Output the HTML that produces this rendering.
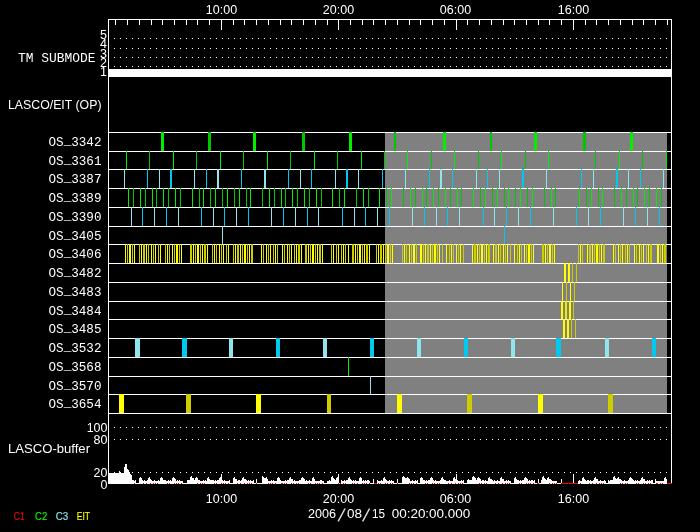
<!DOCTYPE html>
<html lang="en">
<head>
<meta charset="utf-8">
<title>LASCO/EIT schedule 2006/08/15</title>
<style>
html,body{margin:0;padding:0;background:#000;}
body{width:700px;height:532px;overflow:hidden;}
svg{display:block;}
</style>
</head>
<body>
<svg width="700" height="532" viewBox="0 0 700 532">
<rect width="700" height="532" fill="#000"/>
<g shape-rendering="crispEdges">
<rect x="385" y="133" width="282" height="280" fill="#808080"/>
<rect x="108" y="19" width="1" height="465" fill="#fff"/>
<rect x="671" y="19" width="1" height="465" fill="#fff"/>
<rect x="108" y="19" width="564" height="1" fill="#fff"/>
<rect x="115" y="20" width="1" height="5" fill="#fff"/>
<rect x="127" y="20" width="1" height="5" fill="#fff"/>
<rect x="139" y="20" width="1" height="5" fill="#fff"/>
<rect x="151" y="20" width="1" height="5" fill="#fff"/>
<rect x="162" y="20" width="1" height="5" fill="#fff"/>
<rect x="174" y="20" width="1" height="5" fill="#fff"/>
<rect x="186" y="20" width="1" height="5" fill="#fff"/>
<rect x="197" y="20" width="1" height="5" fill="#fff"/>
<rect x="209" y="20" width="1" height="5" fill="#fff"/>
<rect x="221" y="20" width="1" height="10" fill="#fff"/>
<rect x="233" y="20" width="1" height="5" fill="#fff"/>
<rect x="244" y="20" width="1" height="5" fill="#fff"/>
<rect x="256" y="20" width="1" height="5" fill="#fff"/>
<rect x="268" y="20" width="1" height="5" fill="#fff"/>
<rect x="280" y="20" width="1" height="5" fill="#fff"/>
<rect x="291" y="20" width="1" height="5" fill="#fff"/>
<rect x="303" y="20" width="1" height="5" fill="#fff"/>
<rect x="315" y="20" width="1" height="5" fill="#fff"/>
<rect x="327" y="20" width="1" height="5" fill="#fff"/>
<rect x="338" y="20" width="1" height="10" fill="#fff"/>
<rect x="350" y="20" width="1" height="5" fill="#fff"/>
<rect x="362" y="20" width="1" height="5" fill="#fff"/>
<rect x="373" y="20" width="1" height="5" fill="#fff"/>
<rect x="385" y="20" width="1" height="5" fill="#fff"/>
<rect x="397" y="20" width="1" height="5" fill="#fff"/>
<rect x="409" y="20" width="1" height="5" fill="#fff"/>
<rect x="420" y="20" width="1" height="5" fill="#fff"/>
<rect x="432" y="20" width="1" height="5" fill="#fff"/>
<rect x="444" y="20" width="1" height="5" fill="#fff"/>
<rect x="456" y="20" width="1" height="10" fill="#fff"/>
<rect x="467" y="20" width="1" height="5" fill="#fff"/>
<rect x="479" y="20" width="1" height="5" fill="#fff"/>
<rect x="491" y="20" width="1" height="5" fill="#fff"/>
<rect x="503" y="20" width="1" height="5" fill="#fff"/>
<rect x="514" y="20" width="1" height="5" fill="#fff"/>
<rect x="526" y="20" width="1" height="5" fill="#fff"/>
<rect x="538" y="20" width="1" height="5" fill="#fff"/>
<rect x="549" y="20" width="1" height="5" fill="#fff"/>
<rect x="561" y="20" width="1" height="5" fill="#fff"/>
<rect x="573" y="20" width="1" height="10" fill="#fff"/>
<rect x="585" y="20" width="1" height="5" fill="#fff"/>
<rect x="596" y="20" width="1" height="5" fill="#fff"/>
<rect x="608" y="20" width="1" height="5" fill="#fff"/>
<rect x="620" y="20" width="1" height="5" fill="#fff"/>
<rect x="632" y="20" width="1" height="5" fill="#fff"/>
<rect x="643" y="20" width="1" height="5" fill="#fff"/>
<rect x="655" y="20" width="1" height="5" fill="#fff"/>
<rect x="667" y="20" width="1" height="5" fill="#fff"/>
<path d="M114 38h1v1h-1zM120 38h1v1h-1zM126 38h1v1h-1zM132 38h1v1h-1zM138 38h1v1h-1zM144 38h1v1h-1zM150 38h1v1h-1zM156 38h1v1h-1zM162 38h1v1h-1zM168 38h1v1h-1zM174 38h1v1h-1zM180 38h1v1h-1zM186 38h1v1h-1zM192 38h1v1h-1zM198 38h1v1h-1zM204 38h1v1h-1zM210 38h1v1h-1zM216 38h1v1h-1zM222 38h1v1h-1zM228 38h1v1h-1zM234 38h1v1h-1zM240 38h1v1h-1zM246 38h1v1h-1zM252 38h1v1h-1zM258 38h1v1h-1zM264 38h1v1h-1zM270 38h1v1h-1zM276 38h1v1h-1zM282 38h1v1h-1zM288 38h1v1h-1zM294 38h1v1h-1zM300 38h1v1h-1zM306 38h1v1h-1zM312 38h1v1h-1zM318 38h1v1h-1zM324 38h1v1h-1zM330 38h1v1h-1zM336 38h1v1h-1zM342 38h1v1h-1zM348 38h1v1h-1zM354 38h1v1h-1zM360 38h1v1h-1zM366 38h1v1h-1zM372 38h1v1h-1zM378 38h1v1h-1zM384 38h1v1h-1zM390 38h1v1h-1zM396 38h1v1h-1zM402 38h1v1h-1zM408 38h1v1h-1zM414 38h1v1h-1zM420 38h1v1h-1zM426 38h1v1h-1zM432 38h1v1h-1zM438 38h1v1h-1zM444 38h1v1h-1zM450 38h1v1h-1zM456 38h1v1h-1zM462 38h1v1h-1zM468 38h1v1h-1zM474 38h1v1h-1zM480 38h1v1h-1zM486 38h1v1h-1zM492 38h1v1h-1zM498 38h1v1h-1zM504 38h1v1h-1zM510 38h1v1h-1zM516 38h1v1h-1zM522 38h1v1h-1zM528 38h1v1h-1zM534 38h1v1h-1zM540 38h1v1h-1zM546 38h1v1h-1zM552 38h1v1h-1zM558 38h1v1h-1zM564 38h1v1h-1zM570 38h1v1h-1zM576 38h1v1h-1zM582 38h1v1h-1zM588 38h1v1h-1zM594 38h1v1h-1zM600 38h1v1h-1zM606 38h1v1h-1zM612 38h1v1h-1zM618 38h1v1h-1zM624 38h1v1h-1zM630 38h1v1h-1zM636 38h1v1h-1zM642 38h1v1h-1zM648 38h1v1h-1zM654 38h1v1h-1zM660 38h1v1h-1zM666 38h1v1h-1zM114 48h1v1h-1zM120 48h1v1h-1zM126 48h1v1h-1zM132 48h1v1h-1zM138 48h1v1h-1zM144 48h1v1h-1zM150 48h1v1h-1zM156 48h1v1h-1zM162 48h1v1h-1zM168 48h1v1h-1zM174 48h1v1h-1zM180 48h1v1h-1zM186 48h1v1h-1zM192 48h1v1h-1zM198 48h1v1h-1zM204 48h1v1h-1zM210 48h1v1h-1zM216 48h1v1h-1zM222 48h1v1h-1zM228 48h1v1h-1zM234 48h1v1h-1zM240 48h1v1h-1zM246 48h1v1h-1zM252 48h1v1h-1zM258 48h1v1h-1zM264 48h1v1h-1zM270 48h1v1h-1zM276 48h1v1h-1zM282 48h1v1h-1zM288 48h1v1h-1zM294 48h1v1h-1zM300 48h1v1h-1zM306 48h1v1h-1zM312 48h1v1h-1zM318 48h1v1h-1zM324 48h1v1h-1zM330 48h1v1h-1zM336 48h1v1h-1zM342 48h1v1h-1zM348 48h1v1h-1zM354 48h1v1h-1zM360 48h1v1h-1zM366 48h1v1h-1zM372 48h1v1h-1zM378 48h1v1h-1zM384 48h1v1h-1zM390 48h1v1h-1zM396 48h1v1h-1zM402 48h1v1h-1zM408 48h1v1h-1zM414 48h1v1h-1zM420 48h1v1h-1zM426 48h1v1h-1zM432 48h1v1h-1zM438 48h1v1h-1zM444 48h1v1h-1zM450 48h1v1h-1zM456 48h1v1h-1zM462 48h1v1h-1zM468 48h1v1h-1zM474 48h1v1h-1zM480 48h1v1h-1zM486 48h1v1h-1zM492 48h1v1h-1zM498 48h1v1h-1zM504 48h1v1h-1zM510 48h1v1h-1zM516 48h1v1h-1zM522 48h1v1h-1zM528 48h1v1h-1zM534 48h1v1h-1zM540 48h1v1h-1zM546 48h1v1h-1zM552 48h1v1h-1zM558 48h1v1h-1zM564 48h1v1h-1zM570 48h1v1h-1zM576 48h1v1h-1zM582 48h1v1h-1zM588 48h1v1h-1zM594 48h1v1h-1zM600 48h1v1h-1zM606 48h1v1h-1zM612 48h1v1h-1zM618 48h1v1h-1zM624 48h1v1h-1zM630 48h1v1h-1zM636 48h1v1h-1zM642 48h1v1h-1zM648 48h1v1h-1zM654 48h1v1h-1zM660 48h1v1h-1zM666 48h1v1h-1zM114 57h1v1h-1zM120 57h1v1h-1zM126 57h1v1h-1zM132 57h1v1h-1zM138 57h1v1h-1zM144 57h1v1h-1zM150 57h1v1h-1zM156 57h1v1h-1zM162 57h1v1h-1zM168 57h1v1h-1zM174 57h1v1h-1zM180 57h1v1h-1zM186 57h1v1h-1zM192 57h1v1h-1zM198 57h1v1h-1zM204 57h1v1h-1zM210 57h1v1h-1zM216 57h1v1h-1zM222 57h1v1h-1zM228 57h1v1h-1zM234 57h1v1h-1zM240 57h1v1h-1zM246 57h1v1h-1zM252 57h1v1h-1zM258 57h1v1h-1zM264 57h1v1h-1zM270 57h1v1h-1zM276 57h1v1h-1zM282 57h1v1h-1zM288 57h1v1h-1zM294 57h1v1h-1zM300 57h1v1h-1zM306 57h1v1h-1zM312 57h1v1h-1zM318 57h1v1h-1zM324 57h1v1h-1zM330 57h1v1h-1zM336 57h1v1h-1zM342 57h1v1h-1zM348 57h1v1h-1zM354 57h1v1h-1zM360 57h1v1h-1zM366 57h1v1h-1zM372 57h1v1h-1zM378 57h1v1h-1zM384 57h1v1h-1zM390 57h1v1h-1zM396 57h1v1h-1zM402 57h1v1h-1zM408 57h1v1h-1zM414 57h1v1h-1zM420 57h1v1h-1zM426 57h1v1h-1zM432 57h1v1h-1zM438 57h1v1h-1zM444 57h1v1h-1zM450 57h1v1h-1zM456 57h1v1h-1zM462 57h1v1h-1zM468 57h1v1h-1zM474 57h1v1h-1zM480 57h1v1h-1zM486 57h1v1h-1zM492 57h1v1h-1zM498 57h1v1h-1zM504 57h1v1h-1zM510 57h1v1h-1zM516 57h1v1h-1zM522 57h1v1h-1zM528 57h1v1h-1zM534 57h1v1h-1zM540 57h1v1h-1zM546 57h1v1h-1zM552 57h1v1h-1zM558 57h1v1h-1zM564 57h1v1h-1zM570 57h1v1h-1zM576 57h1v1h-1zM582 57h1v1h-1zM588 57h1v1h-1zM594 57h1v1h-1zM600 57h1v1h-1zM606 57h1v1h-1zM612 57h1v1h-1zM618 57h1v1h-1zM624 57h1v1h-1zM630 57h1v1h-1zM636 57h1v1h-1zM642 57h1v1h-1zM648 57h1v1h-1zM654 57h1v1h-1zM660 57h1v1h-1zM666 57h1v1h-1zM114 66h1v1h-1zM120 66h1v1h-1zM126 66h1v1h-1zM132 66h1v1h-1zM138 66h1v1h-1zM144 66h1v1h-1zM150 66h1v1h-1zM156 66h1v1h-1zM162 66h1v1h-1zM168 66h1v1h-1zM174 66h1v1h-1zM180 66h1v1h-1zM186 66h1v1h-1zM192 66h1v1h-1zM198 66h1v1h-1zM204 66h1v1h-1zM210 66h1v1h-1zM216 66h1v1h-1zM222 66h1v1h-1zM228 66h1v1h-1zM234 66h1v1h-1zM240 66h1v1h-1zM246 66h1v1h-1zM252 66h1v1h-1zM258 66h1v1h-1zM264 66h1v1h-1zM270 66h1v1h-1zM276 66h1v1h-1zM282 66h1v1h-1zM288 66h1v1h-1zM294 66h1v1h-1zM300 66h1v1h-1zM306 66h1v1h-1zM312 66h1v1h-1zM318 66h1v1h-1zM324 66h1v1h-1zM330 66h1v1h-1zM336 66h1v1h-1zM342 66h1v1h-1zM348 66h1v1h-1zM354 66h1v1h-1zM360 66h1v1h-1zM366 66h1v1h-1zM372 66h1v1h-1zM378 66h1v1h-1zM384 66h1v1h-1zM390 66h1v1h-1zM396 66h1v1h-1zM402 66h1v1h-1zM408 66h1v1h-1zM414 66h1v1h-1zM420 66h1v1h-1zM426 66h1v1h-1zM432 66h1v1h-1zM438 66h1v1h-1zM444 66h1v1h-1zM450 66h1v1h-1zM456 66h1v1h-1zM462 66h1v1h-1zM468 66h1v1h-1zM474 66h1v1h-1zM480 66h1v1h-1zM486 66h1v1h-1zM492 66h1v1h-1zM498 66h1v1h-1zM504 66h1v1h-1zM510 66h1v1h-1zM516 66h1v1h-1zM522 66h1v1h-1zM528 66h1v1h-1zM534 66h1v1h-1zM540 66h1v1h-1zM546 66h1v1h-1zM552 66h1v1h-1zM558 66h1v1h-1zM564 66h1v1h-1zM570 66h1v1h-1zM576 66h1v1h-1zM582 66h1v1h-1zM588 66h1v1h-1zM594 66h1v1h-1zM600 66h1v1h-1zM606 66h1v1h-1zM612 66h1v1h-1zM618 66h1v1h-1zM624 66h1v1h-1zM630 66h1v1h-1zM636 66h1v1h-1zM642 66h1v1h-1zM648 66h1v1h-1zM654 66h1v1h-1zM660 66h1v1h-1zM666 66h1v1h-1zM114 427h1v1h-1zM120 427h1v1h-1zM126 427h1v1h-1zM132 427h1v1h-1zM138 427h1v1h-1zM144 427h1v1h-1zM150 427h1v1h-1zM156 427h1v1h-1zM162 427h1v1h-1zM168 427h1v1h-1zM174 427h1v1h-1zM180 427h1v1h-1zM186 427h1v1h-1zM192 427h1v1h-1zM198 427h1v1h-1zM204 427h1v1h-1zM210 427h1v1h-1zM216 427h1v1h-1zM222 427h1v1h-1zM228 427h1v1h-1zM234 427h1v1h-1zM240 427h1v1h-1zM246 427h1v1h-1zM252 427h1v1h-1zM258 427h1v1h-1zM264 427h1v1h-1zM270 427h1v1h-1zM276 427h1v1h-1zM282 427h1v1h-1zM288 427h1v1h-1zM294 427h1v1h-1zM300 427h1v1h-1zM306 427h1v1h-1zM312 427h1v1h-1zM318 427h1v1h-1zM324 427h1v1h-1zM330 427h1v1h-1zM336 427h1v1h-1zM342 427h1v1h-1zM348 427h1v1h-1zM354 427h1v1h-1zM360 427h1v1h-1zM366 427h1v1h-1zM372 427h1v1h-1zM378 427h1v1h-1zM384 427h1v1h-1zM390 427h1v1h-1zM396 427h1v1h-1zM402 427h1v1h-1zM408 427h1v1h-1zM414 427h1v1h-1zM420 427h1v1h-1zM426 427h1v1h-1zM432 427h1v1h-1zM438 427h1v1h-1zM444 427h1v1h-1zM450 427h1v1h-1zM456 427h1v1h-1zM462 427h1v1h-1zM468 427h1v1h-1zM474 427h1v1h-1zM480 427h1v1h-1zM486 427h1v1h-1zM492 427h1v1h-1zM498 427h1v1h-1zM504 427h1v1h-1zM510 427h1v1h-1zM516 427h1v1h-1zM522 427h1v1h-1zM528 427h1v1h-1zM534 427h1v1h-1zM540 427h1v1h-1zM546 427h1v1h-1zM552 427h1v1h-1zM558 427h1v1h-1zM564 427h1v1h-1zM570 427h1v1h-1zM576 427h1v1h-1zM582 427h1v1h-1zM588 427h1v1h-1zM594 427h1v1h-1zM600 427h1v1h-1zM606 427h1v1h-1zM612 427h1v1h-1zM618 427h1v1h-1zM624 427h1v1h-1zM630 427h1v1h-1zM636 427h1v1h-1zM642 427h1v1h-1zM648 427h1v1h-1zM654 427h1v1h-1zM660 427h1v1h-1zM666 427h1v1h-1zM114 439h1v1h-1zM120 439h1v1h-1zM126 439h1v1h-1zM132 439h1v1h-1zM138 439h1v1h-1zM144 439h1v1h-1zM150 439h1v1h-1zM156 439h1v1h-1zM162 439h1v1h-1zM168 439h1v1h-1zM174 439h1v1h-1zM180 439h1v1h-1zM186 439h1v1h-1zM192 439h1v1h-1zM198 439h1v1h-1zM204 439h1v1h-1zM210 439h1v1h-1zM216 439h1v1h-1zM222 439h1v1h-1zM228 439h1v1h-1zM234 439h1v1h-1zM240 439h1v1h-1zM246 439h1v1h-1zM252 439h1v1h-1zM258 439h1v1h-1zM264 439h1v1h-1zM270 439h1v1h-1zM276 439h1v1h-1zM282 439h1v1h-1zM288 439h1v1h-1zM294 439h1v1h-1zM300 439h1v1h-1zM306 439h1v1h-1zM312 439h1v1h-1zM318 439h1v1h-1zM324 439h1v1h-1zM330 439h1v1h-1zM336 439h1v1h-1zM342 439h1v1h-1zM348 439h1v1h-1zM354 439h1v1h-1zM360 439h1v1h-1zM366 439h1v1h-1zM372 439h1v1h-1zM378 439h1v1h-1zM384 439h1v1h-1zM390 439h1v1h-1zM396 439h1v1h-1zM402 439h1v1h-1zM408 439h1v1h-1zM414 439h1v1h-1zM420 439h1v1h-1zM426 439h1v1h-1zM432 439h1v1h-1zM438 439h1v1h-1zM444 439h1v1h-1zM450 439h1v1h-1zM456 439h1v1h-1zM462 439h1v1h-1zM468 439h1v1h-1zM474 439h1v1h-1zM480 439h1v1h-1zM486 439h1v1h-1zM492 439h1v1h-1zM498 439h1v1h-1zM504 439h1v1h-1zM510 439h1v1h-1zM516 439h1v1h-1zM522 439h1v1h-1zM528 439h1v1h-1zM534 439h1v1h-1zM540 439h1v1h-1zM546 439h1v1h-1zM552 439h1v1h-1zM558 439h1v1h-1zM564 439h1v1h-1zM570 439h1v1h-1zM576 439h1v1h-1zM582 439h1v1h-1zM588 439h1v1h-1zM594 439h1v1h-1zM600 439h1v1h-1zM606 439h1v1h-1zM612 439h1v1h-1zM618 439h1v1h-1zM624 439h1v1h-1zM630 439h1v1h-1zM636 439h1v1h-1zM642 439h1v1h-1zM648 439h1v1h-1zM654 439h1v1h-1zM660 439h1v1h-1zM666 439h1v1h-1zM114 472h1v1h-1zM120 472h1v1h-1zM126 472h1v1h-1zM132 472h1v1h-1zM138 472h1v1h-1zM144 472h1v1h-1zM150 472h1v1h-1zM156 472h1v1h-1zM162 472h1v1h-1zM168 472h1v1h-1zM174 472h1v1h-1zM180 472h1v1h-1zM186 472h1v1h-1zM192 472h1v1h-1zM198 472h1v1h-1zM204 472h1v1h-1zM210 472h1v1h-1zM216 472h1v1h-1zM222 472h1v1h-1zM228 472h1v1h-1zM234 472h1v1h-1zM240 472h1v1h-1zM246 472h1v1h-1zM252 472h1v1h-1zM258 472h1v1h-1zM264 472h1v1h-1zM270 472h1v1h-1zM276 472h1v1h-1zM282 472h1v1h-1zM288 472h1v1h-1zM294 472h1v1h-1zM300 472h1v1h-1zM306 472h1v1h-1zM312 472h1v1h-1zM318 472h1v1h-1zM324 472h1v1h-1zM330 472h1v1h-1zM336 472h1v1h-1zM342 472h1v1h-1zM348 472h1v1h-1zM354 472h1v1h-1zM360 472h1v1h-1zM366 472h1v1h-1zM372 472h1v1h-1zM378 472h1v1h-1zM384 472h1v1h-1zM390 472h1v1h-1zM396 472h1v1h-1zM402 472h1v1h-1zM408 472h1v1h-1zM414 472h1v1h-1zM420 472h1v1h-1zM426 472h1v1h-1zM432 472h1v1h-1zM438 472h1v1h-1zM444 472h1v1h-1zM450 472h1v1h-1zM456 472h1v1h-1zM462 472h1v1h-1zM468 472h1v1h-1zM474 472h1v1h-1zM480 472h1v1h-1zM486 472h1v1h-1zM492 472h1v1h-1zM498 472h1v1h-1zM504 472h1v1h-1zM510 472h1v1h-1zM516 472h1v1h-1zM522 472h1v1h-1zM528 472h1v1h-1zM534 472h1v1h-1zM540 472h1v1h-1zM546 472h1v1h-1zM552 472h1v1h-1zM558 472h1v1h-1zM564 472h1v1h-1zM570 472h1v1h-1zM576 472h1v1h-1zM582 472h1v1h-1zM588 472h1v1h-1zM594 472h1v1h-1zM600 472h1v1h-1zM606 472h1v1h-1zM612 472h1v1h-1zM618 472h1v1h-1zM624 472h1v1h-1zM630 472h1v1h-1zM636 472h1v1h-1zM642 472h1v1h-1zM648 472h1v1h-1zM654 472h1v1h-1zM660 472h1v1h-1zM666 472h1v1h-1z" fill="#fff"/>
<rect x="109" y="69" width="562" height="8" fill="#fff"/>
<rect x="108" y="132" width="564" height="1" fill="#fff"/>
<rect x="108" y="151" width="564" height="1" fill="#fff"/>
<rect x="108" y="169" width="564" height="1" fill="#fff"/>
<rect x="108" y="188" width="564" height="1" fill="#fff"/>
<rect x="108" y="207" width="564" height="1" fill="#fff"/>
<rect x="108" y="226" width="564" height="1" fill="#fff"/>
<rect x="108" y="244" width="564" height="1" fill="#fff"/>
<rect x="108" y="263" width="564" height="1" fill="#fff"/>
<rect x="108" y="282" width="564" height="1" fill="#fff"/>
<rect x="108" y="301" width="564" height="1" fill="#fff"/>
<rect x="108" y="319" width="564" height="1" fill="#fff"/>
<rect x="108" y="338" width="564" height="1" fill="#fff"/>
<rect x="108" y="357" width="564" height="1" fill="#fff"/>
<rect x="108" y="376" width="564" height="1" fill="#fff"/>
<rect x="108" y="394" width="564" height="1" fill="#fff"/>
<rect x="108" y="413" width="564" height="1" fill="#fff"/>
<rect x="161" y="132" width="3" height="19" fill="#00ee00"/>
<rect x="208" y="132" width="3" height="19" fill="#00c800"/>
<rect x="253" y="132" width="3" height="19" fill="#00ee00"/>
<rect x="302" y="132" width="3" height="19" fill="#00c800"/>
<rect x="349" y="132" width="3" height="19" fill="#00ee00"/>
<rect x="394" y="132" width="2" height="19" fill="#00c800"/>
<rect x="443" y="132" width="3" height="19" fill="#00ee00"/>
<rect x="490" y="132" width="2" height="19" fill="#00c800"/>
<rect x="534" y="132" width="3" height="19" fill="#00ee00"/>
<rect x="583" y="132" width="3" height="19" fill="#00c800"/>
<rect x="630" y="132" width="3" height="19" fill="#00ee00"/>
<rect x="126" y="151" width="1" height="18" fill="#00ee00"/>
<rect x="149" y="151" width="1" height="18" fill="#00c800"/>
<rect x="173" y="151" width="1" height="18" fill="#00ee00"/>
<rect x="196" y="151" width="1" height="18" fill="#00c800"/>
<rect x="220" y="151" width="1" height="18" fill="#00ee00"/>
<rect x="243" y="151" width="1" height="18" fill="#00c800"/>
<rect x="267" y="151" width="1" height="18" fill="#00ee00"/>
<rect x="290" y="151" width="1" height="18" fill="#00c800"/>
<rect x="314" y="151" width="1" height="18" fill="#00ee00"/>
<rect x="337" y="151" width="1" height="18" fill="#00c800"/>
<rect x="361" y="151" width="1" height="18" fill="#00ee00"/>
<rect x="384" y="151" width="1" height="18" fill="#00c800"/>
<rect x="407" y="151" width="1" height="18" fill="#00ee00"/>
<rect x="431" y="151" width="1" height="18" fill="#00c800"/>
<rect x="454" y="151" width="1" height="18" fill="#00ee00"/>
<rect x="478" y="151" width="1" height="18" fill="#00c800"/>
<rect x="501" y="151" width="1" height="18" fill="#00ee00"/>
<rect x="525" y="151" width="1" height="18" fill="#00c800"/>
<rect x="548" y="151" width="1" height="18" fill="#00ee00"/>
<rect x="595" y="151" width="1" height="18" fill="#00c800"/>
<rect x="619" y="151" width="1" height="18" fill="#00ee00"/>
<rect x="642" y="151" width="1" height="18" fill="#00c800"/>
<rect x="666" y="151" width="1" height="18" fill="#00ee00"/>
<rect x="124" y="169" width="1" height="19" fill="#8ee5ee"/>
<rect x="147" y="169" width="1" height="19" fill="#00c8ee"/>
<rect x="159" y="169" width="1" height="19" fill="#8ee5ee"/>
<rect x="170" y="169" width="2" height="19" fill="#00c8ee"/>
<rect x="194" y="169" width="1" height="19" fill="#8ee5ee"/>
<rect x="206" y="169" width="1" height="19" fill="#00c8ee"/>
<rect x="217" y="169" width="2" height="19" fill="#8ee5ee"/>
<rect x="241" y="169" width="1" height="19" fill="#00c8ee"/>
<rect x="264" y="169" width="2" height="19" fill="#8ee5ee"/>
<rect x="288" y="169" width="1" height="19" fill="#00c8ee"/>
<rect x="300" y="169" width="1" height="19" fill="#8ee5ee"/>
<rect x="311" y="169" width="1" height="19" fill="#00c8ee"/>
<rect x="335" y="169" width="1" height="19" fill="#8ee5ee"/>
<rect x="346" y="169" width="2" height="19" fill="#00c8ee"/>
<rect x="358" y="169" width="1" height="19" fill="#8ee5ee"/>
<rect x="382" y="169" width="1" height="19" fill="#00c8ee"/>
<rect x="405" y="169" width="1" height="19" fill="#8ee5ee"/>
<rect x="429" y="169" width="1" height="19" fill="#00c8ee"/>
<rect x="440" y="169" width="2" height="19" fill="#8ee5ee"/>
<rect x="452" y="169" width="1" height="19" fill="#00c8ee"/>
<rect x="476" y="169" width="1" height="19" fill="#8ee5ee"/>
<rect x="487" y="169" width="1" height="19" fill="#00c8ee"/>
<rect x="499" y="169" width="1" height="19" fill="#8ee5ee"/>
<rect x="522" y="169" width="2" height="19" fill="#00c8ee"/>
<rect x="546" y="169" width="1" height="19" fill="#8ee5ee"/>
<rect x="581" y="169" width="1" height="19" fill="#00c8ee"/>
<rect x="593" y="169" width="1" height="19" fill="#8ee5ee"/>
<rect x="616" y="169" width="2" height="19" fill="#00c8ee"/>
<rect x="628" y="169" width="1" height="19" fill="#8ee5ee"/>
<rect x="640" y="169" width="1" height="19" fill="#00c8ee"/>
<rect x="663" y="169" width="1" height="19" fill="#8ee5ee"/>
<rect x="128" y="188" width="1" height="19" fill="#00ee00"/>
<rect x="133" y="188" width="1" height="19" fill="#00c800"/>
<rect x="140" y="188" width="1" height="19" fill="#00ee00"/>
<rect x="145" y="188" width="1" height="19" fill="#00c800"/>
<rect x="152" y="188" width="1" height="19" fill="#00ee00"/>
<rect x="156" y="188" width="1" height="19" fill="#00c800"/>
<rect x="163" y="188" width="1" height="19" fill="#00ee00"/>
<rect x="168" y="188" width="1" height="19" fill="#00c800"/>
<rect x="175" y="188" width="1" height="19" fill="#00ee00"/>
<rect x="180" y="188" width="1" height="19" fill="#00c800"/>
<rect x="192" y="188" width="1" height="19" fill="#00ee00"/>
<rect x="199" y="188" width="1" height="19" fill="#00c800"/>
<rect x="203" y="188" width="1" height="19" fill="#00ee00"/>
<rect x="210" y="188" width="1" height="19" fill="#00c800"/>
<rect x="215" y="188" width="1" height="19" fill="#00ee00"/>
<rect x="222" y="188" width="1" height="19" fill="#00c800"/>
<rect x="227" y="188" width="1" height="19" fill="#00ee00"/>
<rect x="234" y="188" width="1" height="19" fill="#00c800"/>
<rect x="239" y="188" width="1" height="19" fill="#00ee00"/>
<rect x="246" y="188" width="1" height="19" fill="#00c800"/>
<rect x="250" y="188" width="1" height="19" fill="#00ee00"/>
<rect x="262" y="188" width="1" height="19" fill="#00c800"/>
<rect x="269" y="188" width="1" height="19" fill="#00ee00"/>
<rect x="274" y="188" width="1" height="19" fill="#00c800"/>
<rect x="281" y="188" width="1" height="19" fill="#00ee00"/>
<rect x="285" y="188" width="1" height="19" fill="#00c800"/>
<rect x="292" y="188" width="1" height="19" fill="#00ee00"/>
<rect x="297" y="188" width="1" height="19" fill="#00c800"/>
<rect x="304" y="188" width="1" height="19" fill="#00ee00"/>
<rect x="309" y="188" width="1" height="19" fill="#00c800"/>
<rect x="316" y="188" width="1" height="19" fill="#00ee00"/>
<rect x="321" y="188" width="1" height="19" fill="#00c800"/>
<rect x="332" y="188" width="1" height="19" fill="#00ee00"/>
<rect x="339" y="188" width="1" height="19" fill="#00c800"/>
<rect x="344" y="188" width="1" height="19" fill="#00ee00"/>
<rect x="356" y="188" width="1" height="19" fill="#00c800"/>
<rect x="363" y="188" width="1" height="19" fill="#00ee00"/>
<rect x="368" y="188" width="1" height="19" fill="#00c800"/>
<rect x="379" y="188" width="1" height="19" fill="#00ee00"/>
<rect x="386" y="188" width="1" height="19" fill="#00c800"/>
<rect x="391" y="188" width="1" height="19" fill="#00ee00"/>
<rect x="403" y="188" width="1" height="19" fill="#00c800"/>
<rect x="410" y="188" width="1" height="19" fill="#00ee00"/>
<rect x="415" y="188" width="1" height="19" fill="#00c800"/>
<rect x="422" y="188" width="1" height="19" fill="#00ee00"/>
<rect x="426" y="188" width="1" height="19" fill="#00c800"/>
<rect x="433" y="188" width="1" height="19" fill="#00ee00"/>
<rect x="438" y="188" width="1" height="19" fill="#00c800"/>
<rect x="445" y="188" width="1" height="19" fill="#00ee00"/>
<rect x="450" y="188" width="1" height="19" fill="#00c800"/>
<rect x="457" y="188" width="1" height="19" fill="#00ee00"/>
<rect x="461" y="188" width="1" height="19" fill="#00c800"/>
<rect x="473" y="188" width="1" height="19" fill="#00ee00"/>
<rect x="480" y="188" width="1" height="19" fill="#00c800"/>
<rect x="485" y="188" width="1" height="19" fill="#00ee00"/>
<rect x="492" y="188" width="1" height="19" fill="#00c800"/>
<rect x="497" y="188" width="1" height="19" fill="#00ee00"/>
<rect x="504" y="188" width="1" height="19" fill="#00c800"/>
<rect x="508" y="188" width="1" height="19" fill="#00ee00"/>
<rect x="515" y="188" width="1" height="19" fill="#00c800"/>
<rect x="520" y="188" width="1" height="19" fill="#00ee00"/>
<rect x="527" y="188" width="1" height="19" fill="#00c800"/>
<rect x="532" y="188" width="1" height="19" fill="#00ee00"/>
<rect x="544" y="188" width="1" height="19" fill="#00c800"/>
<rect x="551" y="188" width="1" height="19" fill="#00ee00"/>
<rect x="555" y="188" width="1" height="19" fill="#00c800"/>
<rect x="579" y="188" width="1" height="19" fill="#00ee00"/>
<rect x="586" y="188" width="1" height="19" fill="#00c800"/>
<rect x="591" y="188" width="1" height="19" fill="#00ee00"/>
<rect x="598" y="188" width="1" height="19" fill="#00c800"/>
<rect x="602" y="188" width="1" height="19" fill="#00ee00"/>
<rect x="614" y="188" width="1" height="19" fill="#00c800"/>
<rect x="621" y="188" width="1" height="19" fill="#00ee00"/>
<rect x="626" y="188" width="1" height="19" fill="#00c800"/>
<rect x="633" y="188" width="1" height="19" fill="#00ee00"/>
<rect x="637" y="188" width="1" height="19" fill="#00c800"/>
<rect x="644" y="188" width="1" height="19" fill="#00ee00"/>
<rect x="649" y="188" width="1" height="19" fill="#00c800"/>
<rect x="656" y="188" width="1" height="19" fill="#00ee00"/>
<rect x="661" y="188" width="1" height="19" fill="#00c800"/>
<rect x="131" y="207" width="1" height="19" fill="#8ee5ee"/>
<rect x="142" y="207" width="1" height="19" fill="#00c8ee"/>
<rect x="154" y="207" width="1" height="19" fill="#8ee5ee"/>
<rect x="166" y="207" width="1" height="19" fill="#00c8ee"/>
<rect x="178" y="207" width="1" height="19" fill="#8ee5ee"/>
<rect x="201" y="207" width="1" height="19" fill="#00c8ee"/>
<rect x="213" y="207" width="1" height="19" fill="#8ee5ee"/>
<rect x="224" y="207" width="1" height="19" fill="#00c8ee"/>
<rect x="236" y="207" width="1" height="19" fill="#8ee5ee"/>
<rect x="248" y="207" width="1" height="19" fill="#00c8ee"/>
<rect x="271" y="207" width="1" height="19" fill="#8ee5ee"/>
<rect x="283" y="207" width="1" height="19" fill="#00c8ee"/>
<rect x="295" y="207" width="1" height="19" fill="#8ee5ee"/>
<rect x="307" y="207" width="1" height="19" fill="#00c8ee"/>
<rect x="318" y="207" width="1" height="19" fill="#8ee5ee"/>
<rect x="342" y="207" width="1" height="19" fill="#00c8ee"/>
<rect x="354" y="207" width="1" height="19" fill="#8ee5ee"/>
<rect x="365" y="207" width="1" height="19" fill="#00c8ee"/>
<rect x="377" y="207" width="1" height="19" fill="#8ee5ee"/>
<rect x="389" y="207" width="1" height="19" fill="#00c8ee"/>
<rect x="412" y="207" width="1" height="19" fill="#8ee5ee"/>
<rect x="424" y="207" width="1" height="19" fill="#00c8ee"/>
<rect x="436" y="207" width="1" height="19" fill="#8ee5ee"/>
<rect x="447" y="207" width="1" height="19" fill="#00c8ee"/>
<rect x="459" y="207" width="1" height="19" fill="#8ee5ee"/>
<rect x="483" y="207" width="1" height="19" fill="#00c8ee"/>
<rect x="494" y="207" width="1" height="19" fill="#8ee5ee"/>
<rect x="506" y="207" width="1" height="19" fill="#00c8ee"/>
<rect x="518" y="207" width="1" height="19" fill="#8ee5ee"/>
<rect x="530" y="207" width="1" height="19" fill="#00c8ee"/>
<rect x="553" y="207" width="1" height="19" fill="#8ee5ee"/>
<rect x="576" y="207" width="1" height="19" fill="#00c8ee"/>
<rect x="588" y="207" width="1" height="19" fill="#8ee5ee"/>
<rect x="600" y="207" width="1" height="19" fill="#00c8ee"/>
<rect x="623" y="207" width="1" height="19" fill="#8ee5ee"/>
<rect x="635" y="207" width="1" height="19" fill="#00c8ee"/>
<rect x="647" y="207" width="1" height="19" fill="#8ee5ee"/>
<rect x="659" y="207" width="1" height="19" fill="#00c8ee"/>
<rect x="222" y="226" width="1" height="18" fill="#8ee5ee"/>
<rect x="504" y="226" width="1" height="18" fill="#00c8ee"/>
<rect x="125" y="244" width="1" height="19" fill="#ffff00"/>
<rect x="127" y="244" width="1" height="19" fill="#cdcd00"/>
<rect x="129" y="244" width="2" height="19" fill="#ffff00"/>
<rect x="132" y="244" width="1" height="19" fill="#cdcd00"/>
<rect x="134" y="244" width="1" height="19" fill="#ffff00"/>
<rect x="139" y="244" width="1" height="19" fill="#cdcd00"/>
<rect x="141" y="244" width="1" height="19" fill="#ffff00"/>
<rect x="143" y="244" width="2" height="19" fill="#cdcd00"/>
<rect x="146" y="244" width="1" height="19" fill="#ffff00"/>
<rect x="148" y="244" width="1" height="19" fill="#cdcd00"/>
<rect x="151" y="244" width="1" height="19" fill="#ffff00"/>
<rect x="153" y="244" width="1" height="19" fill="#cdcd00"/>
<rect x="155" y="244" width="1" height="19" fill="#ffff00"/>
<rect x="158" y="244" width="1" height="19" fill="#cdcd00"/>
<rect x="160" y="244" width="1" height="19" fill="#ffff00"/>
<rect x="165" y="244" width="1" height="19" fill="#cdcd00"/>
<rect x="167" y="244" width="1" height="19" fill="#ffff00"/>
<rect x="169" y="244" width="1" height="19" fill="#cdcd00"/>
<rect x="172" y="244" width="1" height="19" fill="#ffff00"/>
<rect x="174" y="244" width="1" height="19" fill="#cdcd00"/>
<rect x="176" y="244" width="2" height="19" fill="#ffff00"/>
<rect x="179" y="244" width="1" height="19" fill="#cdcd00"/>
<rect x="181" y="244" width="1" height="19" fill="#ffff00"/>
<rect x="190" y="244" width="2" height="19" fill="#cdcd00"/>
<rect x="193" y="244" width="1" height="19" fill="#ffff00"/>
<rect x="195" y="244" width="1" height="19" fill="#cdcd00"/>
<rect x="197" y="244" width="2" height="19" fill="#ffff00"/>
<rect x="200" y="244" width="1" height="19" fill="#cdcd00"/>
<rect x="202" y="244" width="1" height="19" fill="#ffff00"/>
<rect x="204" y="244" width="2" height="19" fill="#cdcd00"/>
<rect x="207" y="244" width="1" height="19" fill="#ffff00"/>
<rect x="212" y="244" width="1" height="19" fill="#cdcd00"/>
<rect x="214" y="244" width="1" height="19" fill="#ffff00"/>
<rect x="216" y="244" width="1" height="19" fill="#cdcd00"/>
<rect x="219" y="244" width="1" height="19" fill="#ffff00"/>
<rect x="221" y="244" width="1" height="19" fill="#cdcd00"/>
<rect x="223" y="244" width="1" height="19" fill="#ffff00"/>
<rect x="226" y="244" width="1" height="19" fill="#cdcd00"/>
<rect x="228" y="244" width="1" height="19" fill="#ffff00"/>
<rect x="233" y="244" width="1" height="19" fill="#cdcd00"/>
<rect x="235" y="244" width="1" height="19" fill="#ffff00"/>
<rect x="237" y="244" width="2" height="19" fill="#cdcd00"/>
<rect x="240" y="244" width="1" height="19" fill="#ffff00"/>
<rect x="242" y="244" width="1" height="19" fill="#cdcd00"/>
<rect x="244" y="244" width="2" height="19" fill="#ffff00"/>
<rect x="247" y="244" width="1" height="19" fill="#cdcd00"/>
<rect x="249" y="244" width="1" height="19" fill="#ffff00"/>
<rect x="251" y="244" width="2" height="19" fill="#cdcd00"/>
<rect x="261" y="244" width="1" height="19" fill="#ffff00"/>
<rect x="263" y="244" width="1" height="19" fill="#cdcd00"/>
<rect x="266" y="244" width="1" height="19" fill="#ffff00"/>
<rect x="268" y="244" width="1" height="19" fill="#cdcd00"/>
<rect x="270" y="244" width="1" height="19" fill="#ffff00"/>
<rect x="273" y="244" width="1" height="19" fill="#cdcd00"/>
<rect x="275" y="244" width="1" height="19" fill="#ffff00"/>
<rect x="277" y="244" width="1" height="19" fill="#cdcd00"/>
<rect x="282" y="244" width="1" height="19" fill="#ffff00"/>
<rect x="284" y="244" width="1" height="19" fill="#cdcd00"/>
<rect x="287" y="244" width="1" height="19" fill="#ffff00"/>
<rect x="289" y="244" width="1" height="19" fill="#cdcd00"/>
<rect x="291" y="244" width="1" height="19" fill="#ffff00"/>
<rect x="294" y="244" width="1" height="19" fill="#cdcd00"/>
<rect x="296" y="244" width="1" height="19" fill="#ffff00"/>
<rect x="298" y="244" width="2" height="19" fill="#cdcd00"/>
<rect x="301" y="244" width="1" height="19" fill="#ffff00"/>
<rect x="305" y="244" width="2" height="19" fill="#cdcd00"/>
<rect x="308" y="244" width="1" height="19" fill="#ffff00"/>
<rect x="310" y="244" width="1" height="19" fill="#cdcd00"/>
<rect x="312" y="244" width="2" height="19" fill="#ffff00"/>
<rect x="315" y="244" width="1" height="19" fill="#cdcd00"/>
<rect x="317" y="244" width="1" height="19" fill="#ffff00"/>
<rect x="319" y="244" width="2" height="19" fill="#cdcd00"/>
<rect x="322" y="244" width="1" height="19" fill="#ffff00"/>
<rect x="331" y="244" width="1" height="19" fill="#cdcd00"/>
<rect x="333" y="244" width="1" height="19" fill="#ffff00"/>
<rect x="336" y="244" width="1" height="19" fill="#cdcd00"/>
<rect x="338" y="244" width="1" height="19" fill="#ffff00"/>
<rect x="341" y="244" width="1" height="19" fill="#cdcd00"/>
<rect x="343" y="244" width="1" height="19" fill="#ffff00"/>
<rect x="345" y="244" width="1" height="19" fill="#cdcd00"/>
<rect x="348" y="244" width="1" height="19" fill="#ffff00"/>
<rect x="352" y="244" width="2" height="19" fill="#cdcd00"/>
<rect x="355" y="244" width="1" height="19" fill="#ffff00"/>
<rect x="357" y="244" width="1" height="19" fill="#cdcd00"/>
<rect x="359" y="244" width="2" height="19" fill="#ffff00"/>
<rect x="362" y="244" width="1" height="19" fill="#cdcd00"/>
<rect x="364" y="244" width="1" height="19" fill="#ffff00"/>
<rect x="366" y="244" width="2" height="19" fill="#cdcd00"/>
<rect x="369" y="244" width="1" height="19" fill="#ffff00"/>
<rect x="376" y="244" width="1" height="19" fill="#cdcd00"/>
<rect x="378" y="244" width="1" height="19" fill="#ffff00"/>
<rect x="380" y="244" width="2" height="19" fill="#cdcd00"/>
<rect x="383" y="244" width="1" height="19" fill="#ffff00"/>
<rect x="385" y="244" width="1" height="19" fill="#cdcd00"/>
<rect x="387" y="244" width="2" height="19" fill="#ffff00"/>
<rect x="390" y="244" width="1" height="19" fill="#cdcd00"/>
<rect x="392" y="244" width="1" height="19" fill="#ffff00"/>
<rect x="402" y="244" width="1" height="19" fill="#cdcd00"/>
<rect x="404" y="244" width="1" height="19" fill="#ffff00"/>
<rect x="406" y="244" width="1" height="19" fill="#cdcd00"/>
<rect x="409" y="244" width="1" height="19" fill="#ffff00"/>
<rect x="411" y="244" width="1" height="19" fill="#cdcd00"/>
<rect x="413" y="244" width="2" height="19" fill="#ffff00"/>
<rect x="416" y="244" width="1" height="19" fill="#cdcd00"/>
<rect x="420" y="244" width="2" height="19" fill="#ffff00"/>
<rect x="423" y="244" width="1" height="19" fill="#cdcd00"/>
<rect x="425" y="244" width="1" height="19" fill="#ffff00"/>
<rect x="427" y="244" width="2" height="19" fill="#cdcd00"/>
<rect x="430" y="244" width="1" height="19" fill="#ffff00"/>
<rect x="432" y="244" width="1" height="19" fill="#cdcd00"/>
<rect x="434" y="244" width="2" height="19" fill="#ffff00"/>
<rect x="437" y="244" width="1" height="19" fill="#cdcd00"/>
<rect x="439" y="244" width="1" height="19" fill="#ffff00"/>
<rect x="442" y="244" width="1" height="19" fill="#cdcd00"/>
<rect x="446" y="244" width="1" height="19" fill="#ffff00"/>
<rect x="449" y="244" width="1" height="19" fill="#cdcd00"/>
<rect x="451" y="244" width="1" height="19" fill="#ffff00"/>
<rect x="453" y="244" width="1" height="19" fill="#cdcd00"/>
<rect x="456" y="244" width="1" height="19" fill="#ffff00"/>
<rect x="458" y="244" width="1" height="19" fill="#cdcd00"/>
<rect x="460" y="244" width="1" height="19" fill="#ffff00"/>
<rect x="463" y="244" width="1" height="19" fill="#cdcd00"/>
<rect x="472" y="244" width="1" height="19" fill="#ffff00"/>
<rect x="474" y="244" width="2" height="19" fill="#cdcd00"/>
<rect x="477" y="244" width="1" height="19" fill="#ffff00"/>
<rect x="479" y="244" width="1" height="19" fill="#cdcd00"/>
<rect x="481" y="244" width="2" height="19" fill="#ffff00"/>
<rect x="484" y="244" width="1" height="19" fill="#cdcd00"/>
<rect x="486" y="244" width="1" height="19" fill="#ffff00"/>
<rect x="488" y="244" width="2" height="19" fill="#cdcd00"/>
<rect x="493" y="244" width="1" height="19" fill="#ffff00"/>
<rect x="495" y="244" width="2" height="19" fill="#cdcd00"/>
<rect x="498" y="244" width="1" height="19" fill="#ffff00"/>
<rect x="500" y="244" width="1" height="19" fill="#cdcd00"/>
<rect x="503" y="244" width="1" height="19" fill="#ffff00"/>
<rect x="505" y="244" width="1" height="19" fill="#cdcd00"/>
<rect x="507" y="244" width="1" height="19" fill="#ffff00"/>
<rect x="510" y="244" width="1" height="19" fill="#cdcd00"/>
<rect x="514" y="244" width="1" height="19" fill="#ffff00"/>
<rect x="517" y="244" width="1" height="19" fill="#cdcd00"/>
<rect x="519" y="244" width="1" height="19" fill="#ffff00"/>
<rect x="521" y="244" width="1" height="19" fill="#cdcd00"/>
<rect x="524" y="244" width="1" height="19" fill="#ffff00"/>
<rect x="526" y="244" width="1" height="19" fill="#cdcd00"/>
<rect x="528" y="244" width="2" height="19" fill="#ffff00"/>
<rect x="531" y="244" width="1" height="19" fill="#cdcd00"/>
<rect x="533" y="244" width="1" height="19" fill="#ffff00"/>
<rect x="542" y="244" width="2" height="19" fill="#cdcd00"/>
<rect x="545" y="244" width="1" height="19" fill="#ffff00"/>
<rect x="547" y="244" width="1" height="19" fill="#cdcd00"/>
<rect x="549" y="244" width="2" height="19" fill="#ffff00"/>
<rect x="552" y="244" width="1" height="19" fill="#cdcd00"/>
<rect x="554" y="244" width="1" height="19" fill="#ffff00"/>
<rect x="578" y="244" width="1" height="19" fill="#cdcd00"/>
<rect x="580" y="244" width="1" height="19" fill="#ffff00"/>
<rect x="582" y="244" width="1" height="19" fill="#cdcd00"/>
<rect x="587" y="244" width="1" height="19" fill="#ffff00"/>
<rect x="589" y="244" width="2" height="19" fill="#cdcd00"/>
<rect x="592" y="244" width="1" height="19" fill="#ffff00"/>
<rect x="594" y="244" width="1" height="19" fill="#cdcd00"/>
<rect x="596" y="244" width="2" height="19" fill="#ffff00"/>
<rect x="599" y="244" width="1" height="19" fill="#cdcd00"/>
<rect x="601" y="244" width="1" height="19" fill="#ffff00"/>
<rect x="603" y="244" width="2" height="19" fill="#cdcd00"/>
<rect x="613" y="244" width="1" height="19" fill="#ffff00"/>
<rect x="615" y="244" width="1" height="19" fill="#cdcd00"/>
<rect x="618" y="244" width="1" height="19" fill="#ffff00"/>
<rect x="620" y="244" width="1" height="19" fill="#cdcd00"/>
<rect x="622" y="244" width="1" height="19" fill="#ffff00"/>
<rect x="625" y="244" width="1" height="19" fill="#cdcd00"/>
<rect x="627" y="244" width="1" height="19" fill="#ffff00"/>
<rect x="629" y="244" width="1" height="19" fill="#cdcd00"/>
<rect x="634" y="244" width="1" height="19" fill="#ffff00"/>
<rect x="636" y="244" width="1" height="19" fill="#cdcd00"/>
<rect x="639" y="244" width="1" height="19" fill="#ffff00"/>
<rect x="641" y="244" width="1" height="19" fill="#cdcd00"/>
<rect x="643" y="244" width="1" height="19" fill="#ffff00"/>
<rect x="646" y="244" width="1" height="19" fill="#cdcd00"/>
<rect x="648" y="244" width="1" height="19" fill="#ffff00"/>
<rect x="650" y="244" width="2" height="19" fill="#cdcd00"/>
<rect x="657" y="244" width="2" height="19" fill="#ffff00"/>
<rect x="660" y="244" width="1" height="19" fill="#cdcd00"/>
<rect x="662" y="244" width="1" height="19" fill="#ffff00"/>
<rect x="664" y="244" width="2" height="19" fill="#cdcd00"/>
<rect x="564" y="263" width="2" height="19" fill="#ffff00"/>
<rect x="568" y="263" width="2" height="19" fill="#ffff00"/>
<rect x="572" y="263" width="1" height="19" fill="#cdcd00"/>
<rect x="576" y="263" width="1" height="19" fill="#cdcd00"/>
<rect x="562" y="282" width="1" height="19" fill="#ffff00"/>
<rect x="566" y="282" width="1" height="19" fill="#cdcd00"/>
<rect x="570" y="282" width="1" height="19" fill="#ffff00"/>
<rect x="574" y="282" width="1" height="19" fill="#cdcd00"/>
<rect x="561" y="301" width="2" height="18" fill="#ffff00"/>
<rect x="565" y="301" width="2" height="18" fill="#eeee00"/>
<rect x="569" y="301" width="2" height="18" fill="#ffff00"/>
<rect x="573" y="301" width="1" height="18" fill="#cdcd00"/>
<rect x="563" y="319" width="2" height="19" fill="#ffff00"/>
<rect x="567" y="319" width="2" height="19" fill="#ffff00"/>
<rect x="571" y="319" width="1" height="19" fill="#cdcd00"/>
<rect x="575" y="319" width="1" height="19" fill="#cdcd00"/>
<rect x="135" y="338" width="5" height="19" fill="#8ee5ee"/>
<rect x="182" y="338" width="5" height="19" fill="#00c8ee"/>
<rect x="229" y="338" width="4" height="19" fill="#8ee5ee"/>
<rect x="276" y="338" width="4" height="19" fill="#00c8ee"/>
<rect x="323" y="338" width="4" height="19" fill="#8ee5ee"/>
<rect x="370" y="338" width="4" height="19" fill="#00c8ee"/>
<rect x="417" y="338" width="4" height="19" fill="#8ee5ee"/>
<rect x="464" y="338" width="4" height="19" fill="#00c8ee"/>
<rect x="511" y="338" width="4" height="19" fill="#8ee5ee"/>
<rect x="556" y="338" width="5" height="19" fill="#00c8ee"/>
<rect x="605" y="338" width="4" height="19" fill="#8ee5ee"/>
<rect x="652" y="338" width="4" height="19" fill="#00c8ee"/>
<rect x="348" y="357" width="1" height="19" fill="#00ee00"/>
<rect x="370" y="376" width="1" height="18" fill="#8ee5ee"/>
<rect x="119" y="394" width="5" height="19" fill="#ffff00"/>
<rect x="186" y="394" width="5" height="19" fill="#cdcd00"/>
<rect x="256" y="394" width="5" height="19" fill="#ffff00"/>
<rect x="327" y="394" width="4" height="19" fill="#cdcd00"/>
<rect x="397" y="394" width="5" height="19" fill="#ffff00"/>
<rect x="467" y="394" width="5" height="19" fill="#cdcd00"/>
<rect x="538" y="394" width="5" height="19" fill="#ffff00"/>
<rect x="608" y="394" width="5" height="19" fill="#cdcd00"/>
<path d="M109 484V473h1V473h1V473h1V473h1V473h1V472h1V473h1V473h1V473h1V473h1V471h1V472h1V473h1V473h1V473h1V467h1V464h1V464h1V469h1V470h1V472h1V474h1V475h1V480h1V480h1V481h1V480h1V483h1V483h1V483h1V478h1V477h1V478h1V480h1V481h1V480h1V481h1V481h1V480h1V478h1V477h1V479h1V480h1V481h1V481h1V480h1V481h1V481h1V481h1V480h1V481h1V478h1V477h1V478h1V480h1V480h1V480h1V481h1V481h1V480h1V481h1V480h1V481h1V478h1V477h1V478h1V479h1V481h1V480h1V481h1V480h1V481h1V481h1V481h1V483h1V483h1V483h1V483h1V480h1V480h1V480h1V477h1V476h1V478h1V478h1V480h1V478h1V477h1V478h1V480h1V480h1V481h1V481h1V481h1V480h1V481h1V480h1V481h1V478h1V477h1V479h1V480h1V480h1V480h1V480h1V481h1V480h1V481h1V480h1V480h1V478h1V477h1V474h1V480h1V481h1V480h1V481h1V481h1V481h1V481h1V480h1V483h1V483h1V483h1V478h1V477h1V479h1V479h1V481h1V480h1V480h1V481h1V480h1V478h1V477h1V479h1V479h1V480h1V481h1V480h1V481h1V480h1V481h1V481h1V480h1V483h1V483h1V479h1V483h1V483h1V483h1V483h1V483h1V476h1V477h1V478h1V478h1V477h1V479h1V481h1V481h1V481h1V480h1V481h1V480h1V481h1V481h1V481h1V478h1V477h1V478h1V480h1V481h1V481h1V481h1V481h1V480h1V481h1V480h1V480h1V478h1V477h1V479h1V479h1V481h1V480h1V481h1V481h1V481h1V481h1V480h1V480h1V478h1V477h1V478h1V479h1V481h1V480h1V481h1V481h1V480h1V481h1V481h1V478h1V477h1V479h1V481h1V481h1V481h1V481h1V481h1V480h1V480h1V481h1V481h1V483h1V483h1V483h1V481h1V481h1V480h1V481h1V477h1V476h1V478h1V479h1V480h1V478h1V477h1V474h1V483h1V483h1V480h1V481h1V481h1V480h1V481h1V480h1V480h1V478h1V477h1V479h1V480h1V481h1V480h1V481h1V480h1V481h1V481h1V481h1V478h1V477h1V478h1V481h1V480h1V481h1V480h1V481h1V480h1V480h1V481h1V483h1V483h1V483h1V479h1V483h1V483h1V483h1V480h1V481h1V481h1V481h1V480h1V481h1V478h1V477h1V479h1V480h1V481h1V481h1V480h1V481h1V480h1V481h1V481h1V483h1V483h1V483h1V479h1V483h1V483h1V483h1V483h1V477h1V476h1V477h1V478h1V478h1V477h1V478h1V479h1V481h1V481h1V480h1V481h1V481h1V480h1V481h1V480h1V483h1V483h1V478h1V477h1V478h1V480h1V480h1V481h1V480h1V481h1V480h1V480h1V478h1V477h1V478h1V480h1V481h1V480h1V481h1V481h1V481h1V481h1V480h1V478h1V477h1V479h1V480h1V480h1V481h1V481h1V481h1V480h1V481h1V481h1V481h1V478h1V477h1V479h1V474h1V480h1V481h1V481h1V481h1V480h1V481h1V480h1V483h1V483h1V483h1V480h1V479h1V480h1V480h1V480h1V477h1V476h1V477h1V478h1V480h1V478h1V477h1V478h1V479h1V481h1V480h1V480h1V481h1V480h1V481h1V481h1V478h1V477h1V479h1V479h1V480h1V481h1V480h1V481h1V481h1V480h1V481h1V481h1V478h1V477h1V479h1V479h1V481h1V481h1V480h1V481h1V480h1V481h1V481h1V483h1V483h1V483h1V478h1V477h1V479h1V480h1V480h1V481h1V480h1V481h1V480h1V480h1V478h1V477h1V478h1V479h1V481h1V480h1V481h1V480h1V480h1V481h1V480h1V483h1V483h1V483h1V479h1V483h1V483h1V480h1V477h1V476h1V478h1V479h1V480h1V478h1V477h1V479h1V479h1V480h1V481h1V481h1V481h1V481h1V481h1V483h1V483h1V483h1V483h1V479h1V483h1V483h1V483h1V483h1V483h1V483h1V483h1V483h1V483h1V483h1V483h1V474h1V483h1V483h1V483h1V483h1V481h1V480h1V481h1V481h1V478h1V477h1V479h1V480h1V481h1V480h1V480h1V481h1V480h1V481h1V481h1V480h1V478h1V477h1V479h1V479h1V481h1V481h1V480h1V481h1V481h1V481h1V480h1V481h1V483h1V483h1V480h1V481h1V480h1V480h1V480h1V477h1V476h1V478h1V479h1V478h1V477h1V479h1V479h1V480h1V481h1V481h1V480h1V481h1V481h1V481h1V480h1V478h1V477h1V478h1V479h1V480h1V481h1V480h1V481h1V480h1V481h1V481h1V480h1V478h1V477h1V479h1V479h1V481h1V481h1V480h1V481h1V480h1V481h1V480h1V480h1V483h1V483h1V479h1V481h1V481h1V481h1V481h1V481h1V481h1V481h1V481h1V478h1V477h1V479h1V484z" fill="#fff"/>
<path d="M134 483h1v1h-1zM143 483h1v1h-1zM146 483h1v1h-1zM150 483h1v1h-1zM153 483h1v1h-1zM155 483h1v1h-1zM157 483h1v1h-1zM167 483h1v1h-1zM169 483h1v1h-1zM174 483h1v1h-1zM176 483h1v1h-1zM178 483h1v1h-1zM181 483h1v1h-1zM197 483h1v1h-1zM200 483h1v1h-1zM202 483h1v1h-1zM204 483h1v1h-1zM214 483h1v1h-1zM216 483h1v1h-1zM221 483h1v1h-1zM223 483h1v1h-1zM225 483h1v1h-1zM228 483h1v1h-1zM237 483h1v1h-1zM240 483h1v1h-1zM244 483h1v1h-1zM247 483h1v1h-1zM249 483h1v1h-1zM251 483h1v1h-1zM256 483h1v1h-1zM268 483h1v1h-1zM270 483h1v1h-1zM272 483h1v1h-1zM275 483h1v1h-1zM281 483h1v1h-1zM282 483h1v1h-1zM284 483h1v1h-1zM286 483h1v1h-1zM291 483h1v1h-1zM293 483h1v1h-1zM296 483h1v1h-1zM298 483h1v1h-1zM308 483h1v1h-1zM310 483h1v1h-1zM315 483h1v1h-1zM317 483h1v1h-1zM319 483h1v1h-1zM322 483h1v1h-1zM338 483h1v1h-1zM340 483h1v1h-1zM343 483h1v1h-1zM345 483h1v1h-1zM352 483h1v1h-1zM354 483h1v1h-1zM357 483h1v1h-1zM362 483h1v1h-1zM364 483h1v1h-1zM366 483h1v1h-1zM369 483h1v1h-1zM378 483h1v1h-1zM380 483h1v1h-1zM385 483h1v1h-1zM387 483h1v1h-1zM390 483h1v1h-1zM392 483h1v1h-1zM397 483h1v1h-1zM409 483h1v1h-1zM411 483h1v1h-1zM413 483h1v1h-1zM416 483h1v1h-1zM425 483h1v1h-1zM427 483h1v1h-1zM432 483h1v1h-1zM434 483h1v1h-1zM437 483h1v1h-1zM439 483h1v1h-1zM448 483h1v1h-1zM451 483h1v1h-1zM455 483h1v1h-1zM458 483h1v1h-1zM460 483h1v1h-1zM462 483h1v1h-1zM479 483h1v1h-1zM481 483h1v1h-1zM484 483h1v1h-1zM486 483h1v1h-1zM495 483h1v1h-1zM498 483h1v1h-1zM502 483h1v1h-1zM505 483h1v1h-1zM507 483h1v1h-1zM509 483h1v1h-1zM519 483h1v1h-1zM521 483h1v1h-1zM526 483h1v1h-1zM528 483h1v1h-1zM530 483h1v1h-1zM533 483h1v1h-1zM537 483h1v1h-1zM538 483h1v1h-1zM549 483h1v1h-1zM552 483h1v1h-1zM554 483h1v1h-1zM556 483h1v1h-1zM580 483h1v1h-1zM589 483h1v1h-1zM592 483h1v1h-1zM596 483h1v1h-1zM599 483h1v1h-1zM601 483h1v1h-1zM603 483h1v1h-1zM620 483h1v1h-1zM622 483h1v1h-1zM625 483h1v1h-1zM627 483h1v1h-1zM636 483h1v1h-1zM638 483h1v1h-1zM643 483h1v1h-1zM645 483h1v1h-1zM648 483h1v1h-1zM650 483h1v1h-1zM656 483h1v1h-1zM657 483h1v1h-1zM660 483h1v1h-1zM662 483h1v1h-1zM374 483h3v1h-3zM561 483h17v1h-17zM667 483h5v1h-5z" fill="#f00"/>
<rect x="573" y="474" width="1" height="9" fill="#fff"/>
<rect x="561" y="479" width="1" height="4" fill="#fff"/>
</g>
<defs><filter id="noaa" x="0" y="0" width="100%" height="100%" filterUnits="userSpaceOnUse" color-interpolation-filters="sRGB"><feOffset dx="0" dy="0"/></filter></defs>
<g font-family='"Liberation Sans", sans-serif' font-size="12.5" fill="#fff" filter="url(#noaa)">
<text x="221.5" y="14" text-anchor="middle">10:00</text>
<text x="221.5" y="503" text-anchor="middle">10:00</text>
<text x="338.5" y="14" text-anchor="middle">20:00</text>
<text x="338.5" y="503" text-anchor="middle">20:00</text>
<text x="455.5" y="14" text-anchor="middle">06:00</text>
<text x="455.5" y="503" text-anchor="middle">06:00</text>
<text x="573.5" y="14" text-anchor="middle">16:00</text>
<text x="573.5" y="503" text-anchor="middle">16:00</text>
<text x="18" y="62" font-family='"Liberation Mono", monospace' textLength="77.5" lengthAdjust="spacingAndGlyphs">TM SUBMODE</text>
<text x="107" y="39" text-anchor="end">5</text>
<text x="107" y="48.25" text-anchor="end">4</text>
<text x="107" y="57.5" text-anchor="end">3</text>
<text x="107" y="66.75" text-anchor="end">2</text>
<text x="107" y="76" text-anchor="end">1</text>
<text x="8" y="109" textLength="93.5" lengthAdjust="spacingAndGlyphs">LASCO/EIT (OP)</text>
<text x="48.5" y="146" font-family='"Liberation Mono", monospace' textLength="53" lengthAdjust="spacingAndGlyphs">OS<tspan dy="-2">_</tspan><tspan dy="2">3342</tspan></text>
<text x="48.5" y="165" font-family='"Liberation Mono", monospace' textLength="53" lengthAdjust="spacingAndGlyphs">OS<tspan dy="-2">_</tspan><tspan dy="2">3361</tspan></text>
<text x="48.5" y="183" font-family='"Liberation Mono", monospace' textLength="53" lengthAdjust="spacingAndGlyphs">OS<tspan dy="-2">_</tspan><tspan dy="2">3387</tspan></text>
<text x="48.5" y="202" font-family='"Liberation Mono", monospace' textLength="53" lengthAdjust="spacingAndGlyphs">OS<tspan dy="-2">_</tspan><tspan dy="2">3389</tspan></text>
<text x="48.5" y="221" font-family='"Liberation Mono", monospace' textLength="53" lengthAdjust="spacingAndGlyphs">OS<tspan dy="-2">_</tspan><tspan dy="2">3390</tspan></text>
<text x="48.5" y="240" font-family='"Liberation Mono", monospace' textLength="53" lengthAdjust="spacingAndGlyphs">OS<tspan dy="-2">_</tspan><tspan dy="2">3405</tspan></text>
<text x="48.5" y="258" font-family='"Liberation Mono", monospace' textLength="53" lengthAdjust="spacingAndGlyphs">OS<tspan dy="-2">_</tspan><tspan dy="2">3406</tspan></text>
<text x="48.5" y="277" font-family='"Liberation Mono", monospace' textLength="53" lengthAdjust="spacingAndGlyphs">OS<tspan dy="-2">_</tspan><tspan dy="2">3482</tspan></text>
<text x="48.5" y="296" font-family='"Liberation Mono", monospace' textLength="53" lengthAdjust="spacingAndGlyphs">OS<tspan dy="-2">_</tspan><tspan dy="2">3483</tspan></text>
<text x="48.5" y="315" font-family='"Liberation Mono", monospace' textLength="53" lengthAdjust="spacingAndGlyphs">OS<tspan dy="-2">_</tspan><tspan dy="2">3484</tspan></text>
<text x="48.5" y="333" font-family='"Liberation Mono", monospace' textLength="53" lengthAdjust="spacingAndGlyphs">OS<tspan dy="-2">_</tspan><tspan dy="2">3485</tspan></text>
<text x="48.5" y="352" font-family='"Liberation Mono", monospace' textLength="53" lengthAdjust="spacingAndGlyphs">OS<tspan dy="-2">_</tspan><tspan dy="2">3532</tspan></text>
<text x="48.5" y="371" font-family='"Liberation Mono", monospace' textLength="53" lengthAdjust="spacingAndGlyphs">OS<tspan dy="-2">_</tspan><tspan dy="2">3568</tspan></text>
<text x="48.5" y="390" font-family='"Liberation Mono", monospace' textLength="53" lengthAdjust="spacingAndGlyphs">OS<tspan dy="-2">_</tspan><tspan dy="2">3570</tspan></text>
<text x="48.5" y="408" font-family='"Liberation Mono", monospace' textLength="53" lengthAdjust="spacingAndGlyphs">OS<tspan dy="-2">_</tspan><tspan dy="2">3654</tspan></text>
<text x="8" y="453" textLength="82" lengthAdjust="spacingAndGlyphs">LASCO-buffer</text>
<text x="107.5" y="432" text-anchor="end">100</text>
<text x="107.5" y="444" text-anchor="end">80</text>
<text x="107.5" y="477" text-anchor="end">20</text>
<text x="107.5" y="489" text-anchor="end">0</text>
<text y="518"><tspan x="308" textLength="28" lengthAdjust="spacingAndGlyphs">2006</tspan><tspan x="337.6" dy="3" font-size="19" rotate="13" fill="#ddd">/</tspan><tspan x="347" dy="-3" textLength="15" lengthAdjust="spacingAndGlyphs">08</tspan><tspan x="362.1" dy="3" font-size="19" rotate="13" fill="#ddd">/</tspan><tspan x="372" dy="-3" textLength="13" lengthAdjust="spacingAndGlyphs">15</tspan> <tspan x="391.7" textLength="78.6" lengthAdjust="spacingAndGlyphs">00:20:00.000</tspan></text>
<text x="13.8" y="520" font-size="10" fill="#ff0000" stroke="#ff0000" stroke-width="0.12" textLength="10.9" lengthAdjust="spacingAndGlyphs">C1</text>
<text x="35" y="520" font-size="10" fill="#00ff00" stroke="#00ff00" stroke-width="0.12" textLength="12.2" lengthAdjust="spacingAndGlyphs">C2</text>
<text x="55.7" y="520" font-size="10" fill="#8ee5ee" stroke="#8ee5ee" stroke-width="0.12" textLength="12.5" lengthAdjust="spacingAndGlyphs">C3</text>
<text x="76.8" y="520" font-size="10" fill="#ffff00" stroke="#ffff00" stroke-width="0.12" textLength="13.3" lengthAdjust="spacingAndGlyphs">EIT</text>
</g>
</svg>
</body>
</html>
